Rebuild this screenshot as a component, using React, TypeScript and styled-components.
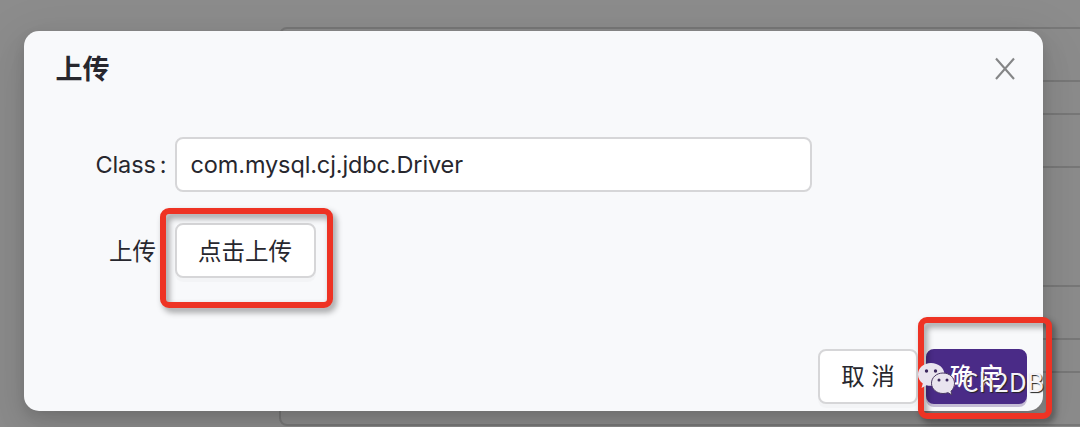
import React from 'react';
import styled, { createGlobalStyle, css } from 'styled-components';

const GlobalStyle = createGlobalStyle`
  * { box-sizing: border-box; }
  body {
    margin: 0;
    overflow: hidden;
    font-family: Inter, "Noto Sans CJK SC", sans-serif;
    color: #27272e;
  }
`;

const Page = styled.div`
  position: relative;
  height: 427px;
  overflow: hidden;
  background: #8c8c8c;
`;

const BackForm = styled.div`
  display: flex;
  flex-direction: column;
  gap: 31px;
  padding: 27px 0 0 279px;
`;

const BackField = styled.div`
  height: 55px;
  flex: none;
  margin-right: -20px;
  border: 2px solid #787878;
  border-radius: 8px;
`;

const BackGap = styled.div`
  height: 55px;
  flex: none;
`;

const Modal = styled.section`
  position: absolute;
  top: 31px;
  left: 23.5px;
  width: 1019px;
  height: 380px;
  display: flex;
  flex-direction: column;
  padding: 20px 15.5px 7.5px 32px;
  border-radius: 15px;
  background: #f8f9fb;
  box-shadow: 0 12px 32px rgba(0, 0, 0, 0.08), 0 6px 12px rgba(0, 0, 0, 0.1), 0 18px 56px 16px rgba(0, 0, 0, 0.05);
`;

const Header = styled.header`
  display: flex;
  justify-content: space-between;
  height: 86px;
`;

const Title = styled.h1`
  margin: 1px 0 0;
  font-size: 27px;
  line-height: 36px;
  font-weight: 600;
`;

const CloseButton = styled.button`
  display: flex;
  align-items: flex-start;
  width: 33px;
  height: 36px;
  padding: 6px 0 0;
  border: 0;
  background: none;
`;

const Row = styled.div`
  display: flex;
  align-items: center;
  height: 55px;
  margin-bottom: 31px;
  font-size: 23.5px;
`;

const Label = styled.label<{ $cjk?: boolean }>`
  width: 119px;
  padding-right: ${p => (p.$cjk ? 18.5 : 8)}px;
  padding-bottom: ${p => (p.$cjk ? 2 : 0)}px;
  text-align: right;
  white-space: nowrap;
  letter-spacing: ${p => (p.$cjk ? 0 : -0.1)}px;
`;

const Colon = styled.span`
  margin-left: 4px;
`;

const Input = styled.input`
  width: 637px;
  height: 55px;
  padding: 0 14px;
  border: 2px solid #d6d6d8;
  border-radius: 8px;
  background: #fff;
  color: inherit;
  font: inherit;
  letter-spacing: -0.12px;
  outline: none;
`;

const Button = styled.button<{ $w: number; $primary?: boolean }>`
  width: ${p => p.$w}px;
  height: 55px;
  padding: 0 0 2px;
  border: 2px solid #d6d6d8;
  border-radius: 8px;
  background: #fff;
  color: inherit;
  font: inherit;
  font-size: 23.5px;
  white-space: pre;
  box-shadow: 0 4px 0 rgba(0, 0, 0, 0.02);
  ${p => p.$primary && css`
    border-color: #4a2b87;
    background: #4a2b87;
    color: #fff;
    font-weight: 500;
    box-shadow: 0 3px 0 rgba(58, 30, 110, 0.27);
  `}
`;

const Footer = styled.footer`
  display: flex;
  justify-content: flex-end;
  gap: 8px;
  margin-top: auto;
`;

const Highlight = styled.div<{ $x: number; $y: number; $w: number; $h: number }>`
  position: absolute;
  left: ${p => p.$x}px;
  top: ${p => p.$y}px;
  width: ${p => p.$w}px;
  height: ${p => p.$h}px;
  border: 6px solid #ee3324;
  border-radius: 9px;
  filter: drop-shadow(3px 4px 3px rgba(0, 0, 0, 0.4));
`;

const Watermark = styled.div`
  position: absolute;
  left: 917px;
  top: 362px;
  display: flex;
  align-items: flex-start;
  gap: 7px;
  color: #f4f2f7;
  font-family: "Noto Sans CJK SC", sans-serif;
  font-size: 26px;
  line-height: 37px;
  text-shadow: 1px 1px 1px #222;
`;

const WechatIcon = () => (
  <svg width="38" height="34" viewBox="0 0 38 34">
    <path d="M14 1C6.5 1 1 6 1 12.500C1 16.200 2.800 19.300 5.800 21.500L4.500 26L9.500 23.300Q12 24 15 23.800C24 23.500 27.500 18 27.500 12.500C27.500 6 21.500 1 14 1Z" fill="#e9e4ef" />
    <path d="M26 11C19.500 11 14.500 15.500 14.500 21.200C14.500 27 19.500 31.500 26 31.500Q28.500 31.500 31 30.700L35 33L34 29.200C36.200 27.300 37.500 24.500 37.500 21.200C37.500 15.500 32.500 11 26 11Z" fill="#e9e4ef" stroke="#493863" strokeWidth="1" />
    <g fill="#3c285e">
      <circle cx="9.500" cy="9" r="1.700" />
      <circle cx="18.500" cy="9" r="1.700" />
      <circle cx="22" cy="18" r="1.500" />
      <circle cx="30" cy="18" r="1.500" />
    </g>
  </svg>
);

export default function App() {
  return (
    <>
      <GlobalStyle />
      <Page>
        <BackForm>
          <BackField />
          <BackField />
          <BackGap />
          <BackField />
          <BackField />
        </BackForm>
        <Modal>
          <Header>
            <Title>上传</Title>
            <CloseButton aria-label="Close">
              <svg width="22" height="24" viewBox="0 0 22 24" fill="none" stroke="#858687" strokeWidth="2.1">
                <path d="M2 1.500L20 22M20 1.500L2 22" />
              </svg>
            </CloseButton>
          </Header>
          <Row>
            <Label>Class<Colon>:</Colon></Label>
            <Input defaultValue="com.mysql.cj.jdbc.Driver" />
          </Row>
          <Row>
            <Label $cjk>上传</Label>
            <Button $w={141}>点击上传</Button>
          </Row>
          <Footer>
            <Button $w={100}>取 消</Button>
            <Button $w={101} $primary>确 定</Button>
          </Footer>
        </Modal>
        <Highlight $x={160} $y={207.5} $w={173} $h={100} />
        <Highlight $x={918} $y={317} $w={134} $h={102} />
        <Watermark>
          <WechatIcon />
          <span>Ch2DB</span>
        </Watermark>
      </Page>
    </>
  );
}
